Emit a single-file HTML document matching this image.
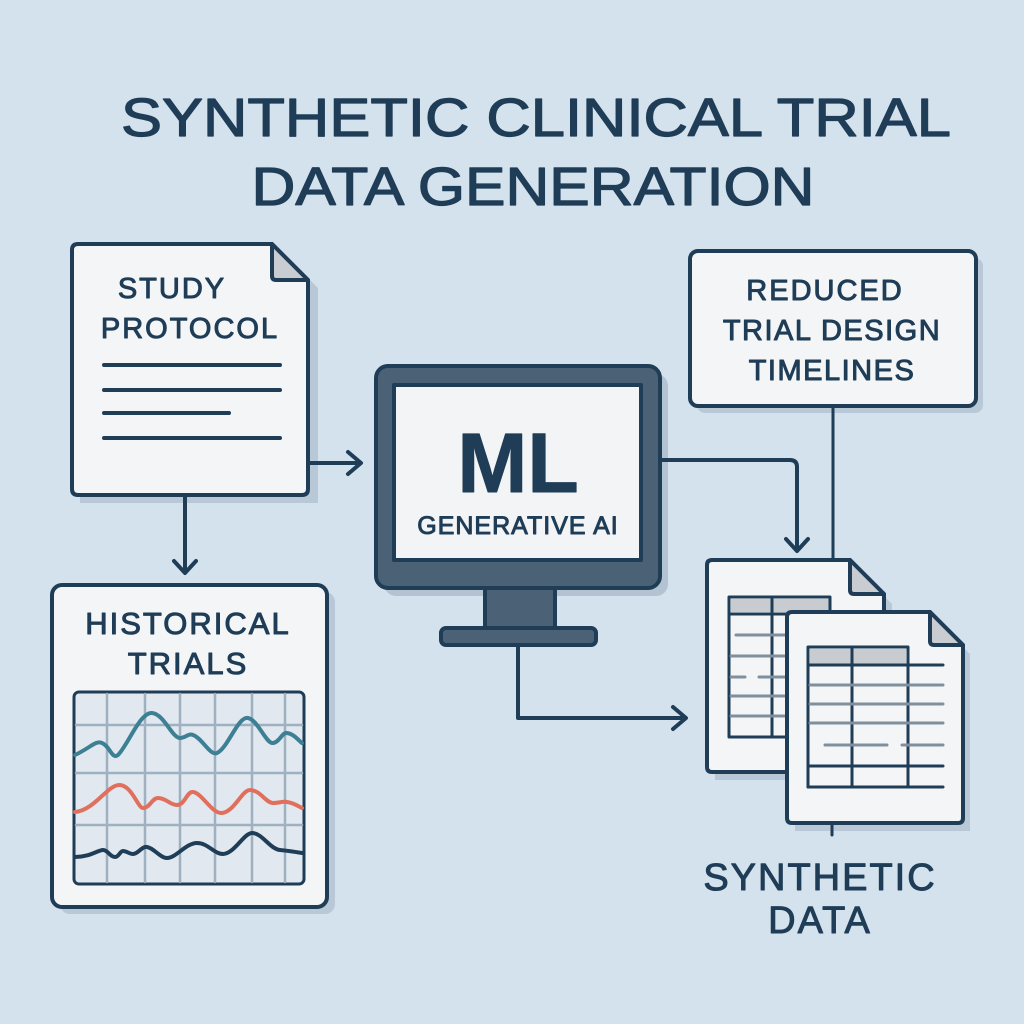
<!DOCTYPE html>
<html><head><meta charset="utf-8"><style>
html,body{margin:0;padding:0;background:#d4e2ed;}
svg{display:block;}
text{font-family:"Liberation Sans",sans-serif;fill:#1f3d57;}
</style></head><body>
<svg width="1024" height="1024" viewBox="0 0 1024 1024" xmlns="http://www.w3.org/2000/svg">
<rect width="1024" height="1024" fill="#d4e2ed"/>
<g stroke="#1f3d57" stroke-linecap="round" stroke-linejoin="round" fill="none">
<!-- title -->
<text x="536" y="136" font-size="54" text-anchor="middle" textLength="830" lengthAdjust="spacingAndGlyphs" stroke="#1f3d57" stroke-width="1.2" style="fill:#1f3d57">SYNTHETIC CLINICAL TRIAL</text>
<text x="533" y="205" font-size="54" text-anchor="middle" textLength="563" lengthAdjust="spacingAndGlyphs" stroke="#1f3d57" stroke-width="1.2" style="fill:#1f3d57">DATA GENERATION</text>

<!-- study protocol -->
<path d="M80 254 H284 L318 288 V503 H80Z" fill="#b9c8d6" stroke="none"/>
<path d="M72 250 Q72 244 78 244 H272 L308 280 V489 Q308 495 302 495 H78 Q72 495 72 489Z" fill="#f4f5f6" stroke-width="4"/>
<path d="M272 244 V276 Q272 280 276 280 H308Z" fill="#c9ccd0" stroke-width="4"/>
<text x="172" y="298" font-size="29" text-anchor="middle" letter-spacing="2" style="fill:#1f3d57">STUDY</text>
<text x="190" y="338" font-size="29" text-anchor="middle" letter-spacing="2" style="fill:#1f3d57">PROTOCOL</text>
<g stroke-width="4"><path d="M104 365H280M104 390H280M104 413H229M104 438H280"/></g>
<path d="M308 463H360M348 452L361 463L348 474" stroke-width="4"/>
<path d="M185 495V572M174 561L185 573L196 561" stroke-width="4"/>

<!-- historical -->
<rect x="60" y="592" width="275" height="322" rx="10" fill="#b9c8d6" stroke="none"/>
<rect x="52" y="585" width="275" height="322" rx="10" fill="#f4f5f6" stroke-width="4"/>
<text x="188" y="634" font-size="31" text-anchor="middle" letter-spacing="2" style="fill:#1f3d57">HISTORICAL</text>
<text x="188" y="674" font-size="31" text-anchor="middle" letter-spacing="2" style="fill:#1f3d57">TRIALS</text>
<rect x="74" y="692" width="230" height="192" rx="5" fill="#e1e8ef" stroke-width="3"/>
<g stroke="#9fb0c0" stroke-width="2.5"><path d="M107 694V882M145 694V882M180 694V882M215 694V882M252 694V882M285 694V882M76 725H302M76 773H302M76 825H302"/></g>
<path d="M75 755 C90 748 96 740 102 743 C110 746 112 760 118 755 C128 745 140 712 152 713 C164 714 172 738 180 738 C186 738 188 733 193 735 C202 738 210 756 217 753 C228 748 238 716 248 718 C258 720 266 744 273 743 C280 742 282 732 287 733 C294 734 298 740 302 743" stroke="#3d7f93" stroke-width="4"/>
<path d="M75 812 C95 810 108 784 120 785 C132 786 138 808 143 808 C150 808 152 798 158 798 C166 798 170 805 177 805 C185 805 187 791 193 792 C202 793 212 814 222 813 C234 812 242 790 250 790 C260 790 266 803 273 803 C280 803 282 801 287 802 C294 803 298 806 302 808" stroke="#e0705d" stroke-width="4"/>
<path d="M75 857 C90 857 98 850 103 850 C108 850 110 857 115 857 C119 857 120 851 123 851 C127 851 129 854 133 854 C138 854 142 846 147 847 C154 848 160 858 167 858 C176 858 186 843 197 843 C208 843 214 854 223 854 C234 854 244 833 252 833 C262 833 270 849 280 850 C290 851 296 852 302 853" stroke="#1f3d57" stroke-width="4"/>

<!-- monitor -->
<rect x="384" y="374" width="284" height="222" rx="12" fill="#b3c3d1" stroke="none"/>
<rect x="376" y="366" width="284" height="222" rx="12" fill="#4b6176" stroke-width="4"/>
<rect x="394" y="385" width="247" height="175" fill="#f3f4f5" stroke-width="4"/>
<text x="518" y="492" font-size="84" font-weight="bold" text-anchor="middle" style="fill:#1f3d57">ML</text>
<text x="518" y="534" font-size="25" text-anchor="middle" letter-spacing="1" style="fill:#1f3d57">GENERATIVE AI</text>
<rect x="485" y="588" width="70" height="42" fill="#4b6176" stroke-width="4"/>
<rect x="441" y="628" width="155" height="17" rx="5" fill="#4b6176" stroke-width="4"/>
<path d="M518 645V718H685M673 707L686 718L673 729" stroke-width="4"/>
<path d="M660 460H790Q797 460 797 467V550M786 539L797 551L808 539" stroke-width="4"/>

<!-- reduced -->
<rect x="697" y="258" width="286" height="155" rx="8" fill="#b9c8d6" stroke="none"/>
<rect x="690" y="251" width="286" height="155" rx="8" fill="#f4f5f6" stroke-width="4"/>
<text x="825" y="300" font-size="29" text-anchor="middle" letter-spacing="2" style="fill:#1f3d57">REDUCED</text>
<text x="832" y="340" font-size="29" text-anchor="middle" letter-spacing="1.5" style="fill:#1f3d57">TRIAL DESIGN</text>
<text x="832" y="380" font-size="29" text-anchor="middle" letter-spacing="1.5" style="fill:#1f3d57">TIMELINES</text>
<path d="M833 406V560" stroke-width="3"/>

<!-- back doc -->
<path d="M715 568H856L892 604V780H715Z" fill="#b9c8d6" stroke="none"/>
<path d="M707 565Q707 560 712 560H850L884 594V767Q884 772 879 772H712Q707 772 707 767Z" fill="#f4f5f6" stroke-width="4"/>
<path d="M850 560V590Q850 594 854 594H884Z" fill="#c9ccd0" stroke-width="4"/>
<rect x="731" y="599" width="99" height="13" fill="#c8cbcf" stroke="none"/>
<path d="M729 597H830V737H729ZM772 597V737M729 614H830" stroke-width="3"/>
<g stroke="#7f8f9d" stroke-width="3"><path d="M736 635H800M731 656H800M731 677H745M759 677H800M731 696H800M731 716H800"/></g>

<!-- front doc -->
<path d="M795 620H936L970 654V831H795Z" fill="#b9c8d6" stroke="none"/>
<path d="M787 617Q787 612 792 612H930L963 645V818Q963 823 958 823H792Q787 823 787 818Z" fill="#f4f5f6" stroke-width="4"/>
<path d="M930 612V641Q930 645 934 645H963Z" fill="#c9ccd0" stroke-width="4"/>
<rect x="810" y="649" width="96" height="15" fill="#c8cbcf" stroke="none"/>
<path d="M808 647H908V787H808ZM852 647V787M908 647V787" stroke-width="3"/>
<path d="M808 665H943M808 766H943M808 787H943" stroke-width="3"/>
<g stroke="#7f8f9d" stroke-width="3"><path d="M810 685H943M810 704H943M810 723H943M825 745H887M902 745H943"/></g>
<path d="M832 823V835" stroke-width="3"/>
<text x="820" y="890" font-size="38" text-anchor="middle" letter-spacing="2" style="fill:#1f3d57">SYNTHETIC</text>
<text x="820" y="933" font-size="38" text-anchor="middle" letter-spacing="2" style="fill:#1f3d57">DATA</text>
</g>
</svg>
</body></html>
